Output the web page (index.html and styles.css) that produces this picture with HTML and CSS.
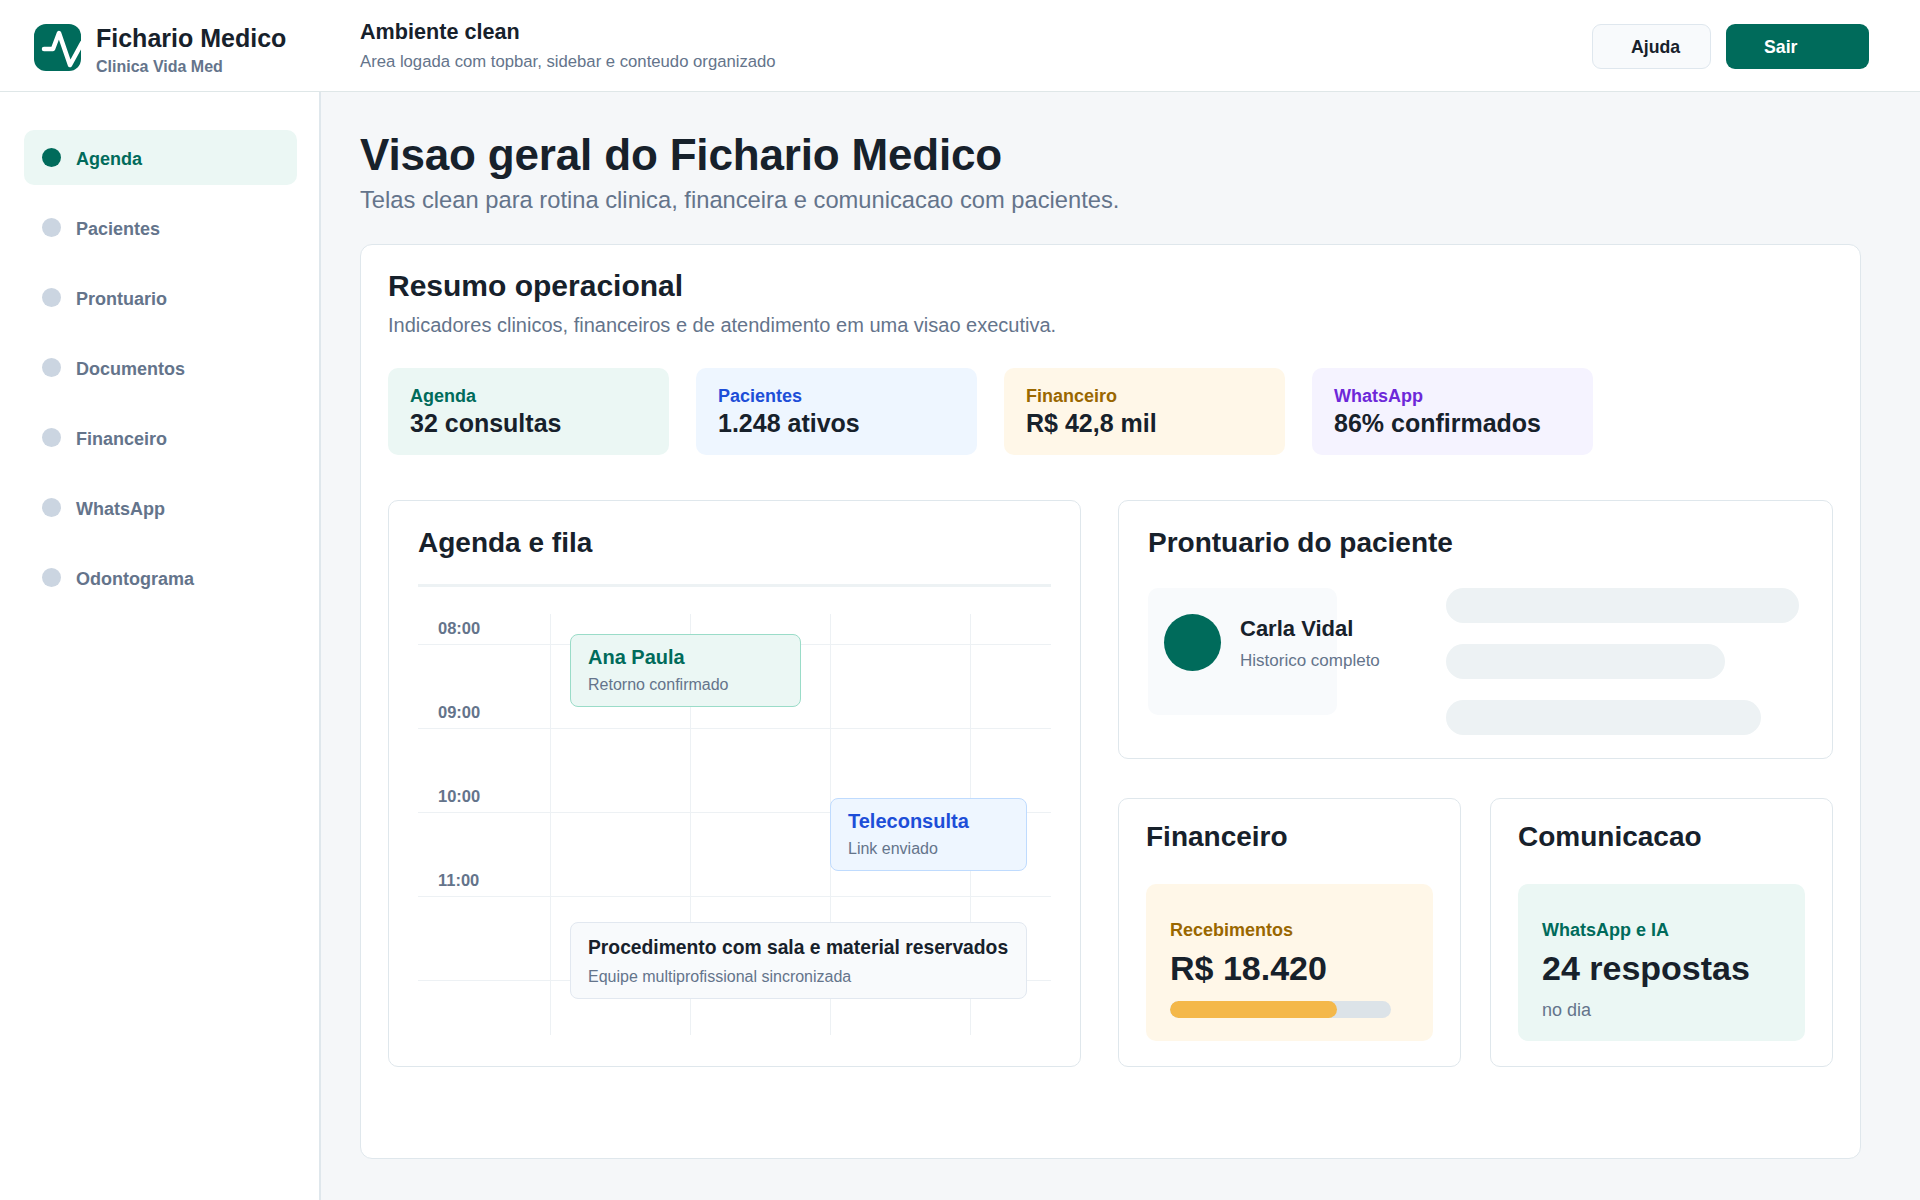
FILE: index.html
```html
<!DOCTYPE html>
<html lang="pt">
<head>
<meta charset="utf-8">
<title>Fichario Medico</title>
<link rel="stylesheet" href="styles.css">
</head>
<body>
<header class="topbar">
  <div class="brand">
    <div class="logo">
      <svg viewBox="0 0 47 47" width="47" height="47"><polyline points="10,25 19,25 25,9 36,41 48,19" fill="none" stroke="#fff" stroke-width="4.5" stroke-linecap="round" stroke-linejoin="round"/></svg>
    </div>
    <div class="brand-text">
      <div class="brand-name">Fichario Medico</div>
      <div class="brand-sub">Clinica Vida Med</div>
    </div>
  </div>
  <div class="context">
    <div class="context-title">Ambiente clean</div>
    <div class="context-sub">Area logada com topbar, sidebar e conteudo organizado</div>
  </div>
  <div class="actions">
    <button class="btn btn-light">Ajuda</button>
    <button class="btn btn-primary">Sair</button>
  </div>
</header>
<div class="layout">
  <nav class="sidebar">
    <a class="nav-item active"><span class="dot"></span>Agenda</a>
    <a class="nav-item"><span class="dot"></span>Pacientes</a>
    <a class="nav-item"><span class="dot"></span>Prontuario</a>
    <a class="nav-item"><span class="dot"></span>Documentos</a>
    <a class="nav-item"><span class="dot"></span>Financeiro</a>
    <a class="nav-item"><span class="dot"></span>WhatsApp</a>
    <a class="nav-item"><span class="dot"></span>Odontograma</a>
  </nav>
  <main class="main">
    <h1 class="page-title">Visao geral do Fichario Medico</h1>
    <p class="page-sub">Telas clean para rotina clinica, financeira e comunicacao com pacientes.</p>
    <section class="panel">
      <h2 class="panel-title">Resumo operacional</h2>
      <p class="panel-sub">Indicadores clinicos, financeiros e de atendimento em uma visao executiva.</p>
      <div class="stats">
        <div class="stat stat-green"><div class="stat-label">Agenda</div><div class="stat-value">32 consultas</div></div>
        <div class="stat stat-blue"><div class="stat-label">Pacientes</div><div class="stat-value">1.248 ativos</div></div>
        <div class="stat stat-amber"><div class="stat-label">Financeiro</div><div class="stat-value">R$ 42,8 mil</div></div>
        <div class="stat stat-purple"><div class="stat-label">WhatsApp</div><div class="stat-value">86% confirmados</div></div>
      </div>
      <div class="content">
        <article class="card card-agenda">
          <h3 class="card-title">Agenda e fila</h3>
          <div class="divider"></div>
          <div class="calendar">
            <div class="cal-row cal-row-first"><span class="time">08:00</span></div>
            <div class="cal-row"><span class="time">09:00</span></div>
            <div class="cal-row"><span class="time">10:00</span></div>
            <div class="cal-row"><span class="time">11:00</span></div>
            <div class="cal-row"></div>
            <div class="event event-green">
              <div class="event-title">Ana Paula</div>
              <div class="event-sub">Retorno confirmado</div>
            </div>
            <div class="event event-blue">
              <div class="event-title">Teleconsulta</div>
              <div class="event-sub">Link enviado</div>
            </div>
            <div class="event event-gray">
              <div class="event-title event-title-sm">Procedimento com sala e material reservados</div>
              <div class="event-sub">Equipe multiprofissional sincronizada</div>
            </div>
          </div>
        </article>
        <div class="right-col">
          <article class="card card-record">
            <h3 class="card-title">Prontuario do paciente</h3>
            <div class="record-body">
              <div class="patient">
                <div class="avatar"></div>
                <div class="patient-text">
                  <div class="patient-name">Carla Vidal</div>
                  <div class="patient-sub">Historico completo</div>
                </div>
              </div>
              <div class="bars">
                <div class="bar bar-1"></div>
                <div class="bar bar-2"></div>
                <div class="bar bar-3"></div>
              </div>
            </div>
          </article>
          <div class="mini-row">
            <article class="card card-mini">
              <h3 class="card-title">Financeiro</h3>
              <div class="mini-box mini-amber">
                <div class="mini-label">Recebimentos</div>
                <div class="mini-value">R$ 18.420</div>
                <div class="progress"><div class="progress-fill"></div></div>
              </div>
            </article>
            <article class="card card-mini">
              <h3 class="card-title">Comunicacao</h3>
              <div class="mini-box mini-green">
                <div class="mini-label">WhatsApp e IA</div>
                <div class="mini-value">24 respostas</div>
                <div class="mini-note">no dia</div>
              </div>
            </article>
          </div>
        </div>
      </div>
    </section>
  </main>
</div>
</body>
</html>
```
FILE: styles.css
```css
* { box-sizing: border-box; }
html, body { margin: 0; height: 100%; }
body {
  font-family: "Liberation Sans", Arial, sans-serif;
  color: #17212b;
  background: #f5f7f9;
  height: 1200px;
  overflow: hidden;
}
h1, h2, h3, p { margin: 0; }

.topbar {
  height: 92px;
  background: #fff;
  border-bottom: 1px solid #dfe7e8;
  display: flex;
  align-items: flex-start;
  padding: 20px 51px 0 34px;
}
.brand { width: 326px; display: flex; align-items: flex-start; gap: 15px; margin-top: 4px; }
.logo { width: 47px; height: 47px; border-radius: 12px; background: #006b5b; overflow: hidden; flex: none; }
.logo svg { display: block; }
.brand-text { margin-top: -1px; }
.brand-name { font-size: 25px; font-weight: 700; line-height: 30px; }
.brand-sub { font-size: 16px; font-weight: 700; color: #64748b; line-height: 20px; margin-top: 4px; }
.context { flex: 1; }
.context-title { font-size: 21.6px; font-weight: 700; line-height: 24px; }
.context-sub { font-size: 16.7px; color: #64748b; line-height: 20px; margin-top: 8px; }
.actions { display: flex; gap: 15px; margin-top: 4px; }
.btn {
  height: 45px;
  font: 700 17.7px "Liberation Sans", Arial, sans-serif;
  border-radius: 9px;
  text-align: left;
  border: 1px solid transparent;
}
.btn-light { width: 119px; padding: 1px 0 0 38px; background: #f8fafc; border-color: #dfe7ee; color: #17212b; }
.btn-primary { width: 143px; padding: 1px 0 0 37px; background: #006b5b; color: #fff; }

.layout { display: flex; height: 1108px; }
.sidebar {
  width: 321px;
  background: #fff;
  border-right: 2px solid #dfe7ec;
  padding: 38px 24px 0 24px;
  display: flex;
  flex-direction: column;
  gap: 15px;
}
.nav-item {
  height: 55px;
  width: 273px;
  border-radius: 10px;
  padding: 3px 18px 0;
  display: flex;
  align-items: center;
  gap: 15px;
  font-size: 18px;
  font-weight: 700;
  color: #64748b;
}
.nav-item.active { background: #ebf7f4; color: #006b5b; }
.dot { width: 19px; height: 19px; border-radius: 50%; background: #cbd5e1; margin-top: -3px; }
.nav-item.active .dot { background: #006b5b; }

.main { flex: 1; padding: 36px 59px 41px 39px; display: flex; flex-direction: column; }
.page-title { font-size: 44px; letter-spacing: -0.17px; line-height: 54px; font-weight: 700; }
.page-sub { font-size: 23.73px; line-height: 28px; color: #64748b; margin-top: 4px; }
.panel {
  flex: 1;
  margin-top: 30px;
  background: #fff;
  border: 1px solid #dfe7ec;
  border-radius: 12px;
  padding: 24px 27px;
}
.panel-title { font-size: 30px; line-height: 34px; font-weight: 700; }
.panel-sub { font-size: 20px; line-height: 24px; color: #64748b; margin-top: 10px; }
.stats { display: grid; grid-template-columns: repeat(4, 281px); gap: 27px; margin-top: 31px; }
.stat { height: 87px; border-radius: 10px; padding: 17px 22px; }
.stat-label { font-size: 18px; font-weight: 700; line-height: 22px; }
.stat-value { font-size: 25px; font-weight: 700; line-height: 30px; margin-top: 1px; }
.stat-green { background: #ebf7f4; } .stat-green .stat-label { color: #006b5b; }
.stat-blue { background: #eef6ff; } .stat-blue .stat-label { color: #1d4ed8; }
.stat-amber { background: #fff7e8; } .stat-amber .stat-label { color: #9a6700; }
.stat-purple { background: #f5f3ff; } .stat-purple .stat-label { color: #6d28d9; }

.content { display: flex; gap: 37px; margin-top: 45px; }
.card { background: #fff; border: 1px solid #dfe7ec; border-radius: 10px; }
.card-title { font-size: 28px; line-height: 34px; font-weight: 700; }
.card-agenda { width: 693px; height: 567px; padding: 25px 29px; }
.divider { height: 3px; background: #edf2f4; margin-top: 24px; }
.calendar {
  position: relative;
  margin-top: 27px;
  height: 421px;
  background-image: repeating-linear-gradient(90deg, transparent 0 139px, #edf1f4 139px 140px);
  background-position: -7px 0;
}
.cal-row {
  height: 84px;
  border-bottom: 1px solid #edf1f4;
  display: flex;
  align-items: flex-end;
  padding: 0 0 6px 20px;
}
.cal-row-first { height: 31px; }
.time { font-size: 16.5px; font-weight: 700; color: #64748b; line-height: 20px; }
.event { position: absolute; border: 1px solid; border-radius: 8px; padding: 9px 17px; }
.event-title { font-size: 20px; font-weight: 700; line-height: 26px; }
.event-title-sm { font-size: 19.3px; white-space: nowrap; }
.event-sub { font-size: 16px; color: #64748b; line-height: 20px; margin-top: 5px; }
.event-green { left: 152px; top: 20px; width: 231px; height: 73px; background: #ebf7f4; border-color: #9adcc8; }
.event-green .event-title { color: #006b5b; }
.event-blue { left: 412px; top: 184px; width: 197px; height: 73px; background: #eef6ff; border-color: #bfdbfe; }
.event-blue .event-title { color: #1d4ed8; }
.event-gray { left: 152px; top: 308px; width: 457px; height: 77px; background: #f8fafc; border-color: #e2e8f0; padding-top: 12px; }
.event-gray .event-sub { margin-top: 6px; }

.right-col { width: 715px; display: flex; flex-direction: column; gap: 39px; }
.card-record { height: 259px; padding: 25px 29px; }
.record-body { display: flex; margin-top: 28px; }
.patient {
  width: 189px;
  height: 127px;
  background: #f8fafc;
  border-radius: 10px;
  padding: 26px 16px;
  display: flex;
  gap: 19px;
  white-space: nowrap;
}
.avatar { width: 57px; height: 57px; border-radius: 50%; background: #006b5b; flex: none; }
.patient-text { margin-top: 1px; }
.patient-name { font-size: 22px; font-weight: 700; line-height: 28px; }
.patient-sub { font-size: 17px; color: #64748b; line-height: 20px; margin-top: 8px; }
.bars { margin-left: 109px; display: flex; flex-direction: column; gap: 21px; }
.bar { height: 35px; border-radius: 18px; background: #edf2f4; }
.bar-1 { width: 353px; }
.bar-2 { width: 279px; }
.bar-3 { width: 315px; }

.mini-row { display: flex; gap: 29px; }
.card-mini { width: 343px; height: 269px; padding: 21px 27px; }
.mini-box { height: 157px; border-radius: 10px; padding: 35px 24px; margin-top: 30px; }
.mini-amber { background: #fff7e8; }
.mini-green { background: #ebf7f4; }
.mini-label { font-size: 18px; font-weight: 700; line-height: 22px; }
.mini-amber .mini-label { color: #9a6700; }
.mini-green .mini-label { color: #006b5b; }
.mini-value { font-size: 34px; font-weight: 700; line-height: 40px; margin-top: 7px; }
.progress { width: 221px; height: 17px; border-radius: 9px; background: #dce3e8; margin-top: 13px; overflow: hidden; }
.progress-fill { width: 75.5%; height: 100%; border-radius: 9px; background: #f4b84a; }
.mini-note { font-size: 18px; color: #64748b; line-height: 22px; margin-top: 11px; }
```
